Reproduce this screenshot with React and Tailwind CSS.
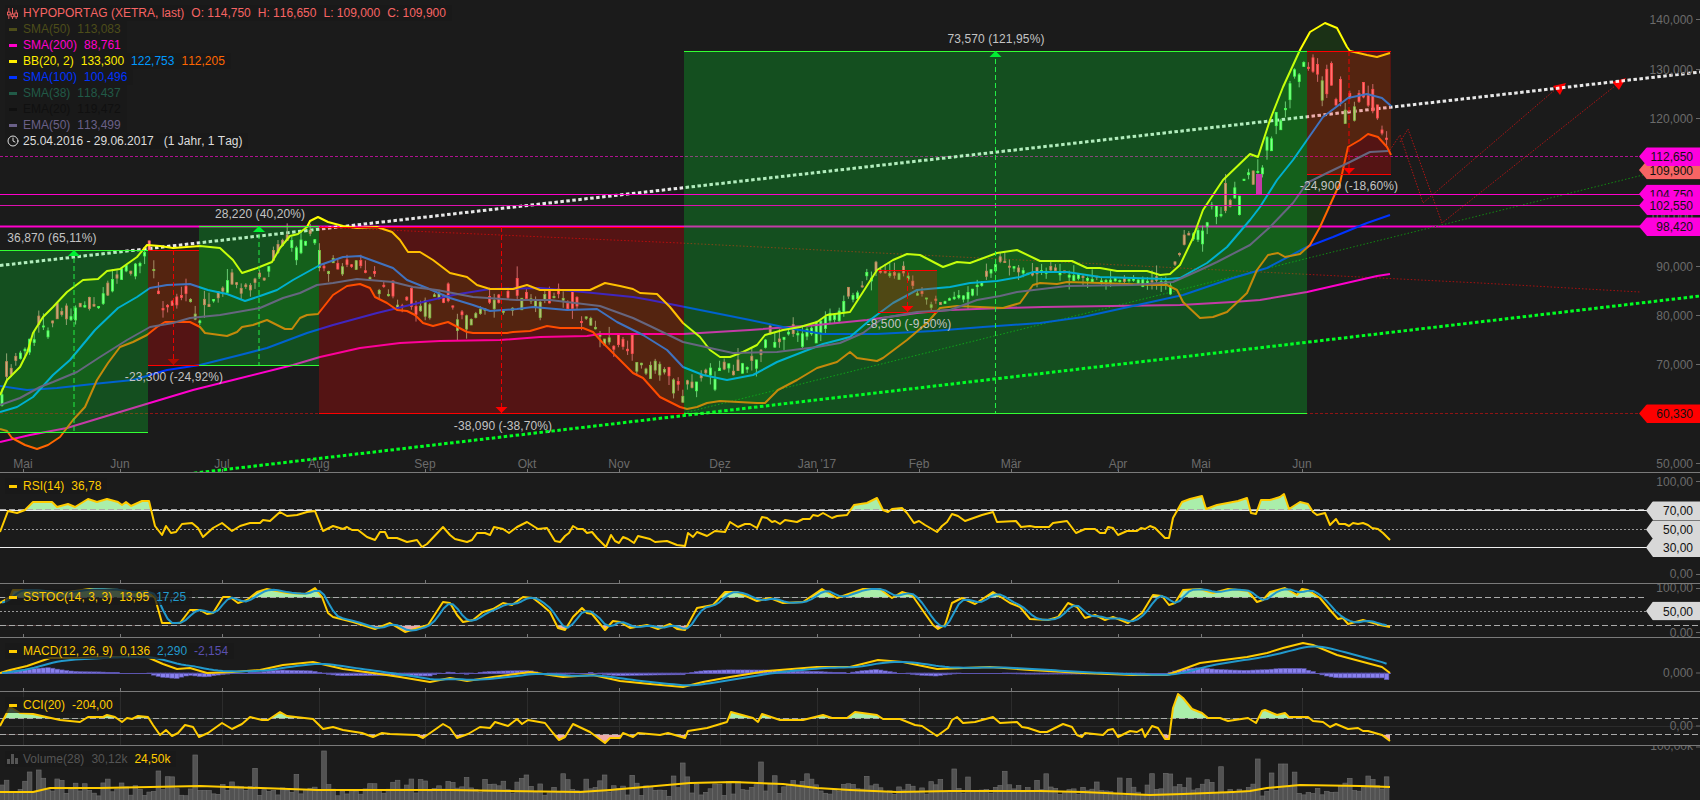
// App.jsx - HYPOPORT AG chart view
import React from "react";
import { Clock } from "lucide-react";

const parse = (s) => s.trim().split(/\s+/).map((p) => p.split(",").map(Number));
const str = (pts) => pts.map((p) => p.join(",")).join(" ");
const interp = (pts, x) => {
  if (x <= pts[0][0]) return pts[0][1];
  for (let i = 1; i < pts.length; i++) {
    if (x <= pts[i][0]) {
      const [x0, y0] = pts[i - 1];
      const [x1, y1] = pts[i];
      return y0 + ((y1 - y0) * (x - x0)) / (x1 - x0 || 1);
    }
  }
  return pts[pts.length - 1][1];
};

let seed = 4711;
const rnd = () => {
  seed = (seed * 16807) % 2147483647;
  return seed / 2147483647;
};

const bbUpper = parse(`0,395 7,380 20,367 27,353 33,333 43,317 53,307 67,292 83,280 98,279 107,271 120,269 137,257 147,245 160,246 173,248 200,246 220,248 233,260 242,273 257,268 272,262 280,248 290,236 298,234 307,227 310,221 318,217 328,222 343,226 357,228 377,227 392,232 400,240 408,252 420,252 433,260 450,273 467,277 477,285 490,289 513,289 527,285 540,290 590,290 605,283 620,286 633,289 640,293 657,294 670,307 683,323 700,337 710,350 720,357 730,357 743,352 757,345 765,335 783,330 800,327 817,322 827,315 850,312 863,292 877,270 893,260 907,254 920,255 943,267 957,262 970,263 997,253 1017,250 1040,261 1072,261 1087,268 1100,268 1117,271 1147,271 1160,275 1170,274 1180,265 1192,240 1203,210 1223,180 1250,154 1258,157 1270,120 1283,87 1300,50 1310,32 1325,23 1337,28 1347,47 1350,51 1367,55 1377,57 1390,53`);
const bbLower = parse(`0,429 7,431 12,438 25,445 37,449 48,445 60,437 73,420 85,407 97,380 108,363 120,347 133,342 147,335 157,327 165,322 190,322 200,327 205,333 227,336 237,332 242,327 253,325 267,320 277,325 285,329 292,329 300,318 307,315 318,314 333,295 347,286 360,284 370,288 375,297 387,303 397,310 407,311 415,315 423,323 433,326 448,322 467,332 473,333 507,333 513,332 530,331 547,326 560,328 583,328 593,332 602,342 617,357 633,373 643,378 660,397 680,407 687,409 697,407 707,403 720,401 757,403 765,403 778,390 797,380 817,368 837,362 850,352 857,358 877,361 883,358 907,340 927,323 940,308 957,306 1003,308 1020,303 1033,285 1040,283 1057,284 1067,282 1100,283 1153,285 1167,285 1177,290 1183,302 1200,318 1213,317 1227,312 1247,293 1257,270 1268,255 1278,253 1285,257 1300,254 1310,245 1320,227 1330,205 1340,183 1348,147 1360,140 1368,134 1378,137 1387,147 1391,155`);
const bbMid = parse(`0,412 17,407 33,397 53,375 70,360 95,330 118,308 137,297 150,288 167,285 190,284 208,290 227,294 245,301 260,296 277,290 293,280 320,265 343,257 360,256 393,268 407,280 427,288 450,298 473,305 490,311 517,309 533,307 567,310 597,309 617,322 643,335 667,350 683,367 703,375 727,380 753,375 777,362 800,353 823,344 850,337 870,320 893,303 917,290 950,287 970,283 997,281 1020,277 1033,272 1067,272 1100,277 1167,279 1180,278 1207,263 1227,247 1250,220 1260,207 1277,180 1293,160 1307,140 1323,117 1348,98 1367,94 1382,98 1391,106`);
const ema50 = parse(`0,405 20,398 40,387 53,382 77,372 100,357 127,340 150,327 173,323 190,318 220,315 260,308 283,298 300,293 317,285 333,283 357,279 393,282 413,287 437,290 473,297 517,300 550,300 600,306 633,318 650,326 683,342 710,348 733,353 777,352 817,347 840,343 863,333 883,318 917,312 950,310 977,300 1000,296 1017,292 1067,286 1133,285 1173,282 1200,270 1217,262 1250,245 1270,227 1293,203 1307,183 1327,173 1350,162 1370,152 1388,151`);
const sma100 = parse(`0,386 27,390 57,388 93,384 133,380 167,370 200,365 240,355 267,348 307,333 333,325 377,313 410,305 453,295 490,289 540,288 583,292 633,297 650,300 700,310 750,320 783,327 823,334 877,334 933,331 983,327 1040,323 1083,317 1133,306 1183,295 1233,278 1267,268 1307,247 1333,237 1367,223 1390,215`);
const sma200 = parse(`0,442 30,435 67,428 100,418 143,405 193,390 233,380 293,365 320,357 360,348 400,343 440,341 500,340 540,337 587,336 600,334 683,334 750,330 817,325 867,320 917,313 950,310 1003,308 1043,307 1180,305 1233,302 1260,300 1307,292 1377,276 1390,274`);
const priceAnchors = parse(`0,410 8,375 15,365 30,335 50,325 70,315 90,305 100,305 115,275 130,268 142,258 150,253 156,285 165,312 175,300 190,295 199,322 205,310 215,300 230,285 240,290 262,282 272,260 285,245 300,240 318,232 322,270 340,262 360,265 380,285 400,300 420,310 440,295 460,320 480,310 500,305 520,300 540,300 560,300 575,310 590,325 600,330 615,345 640,360 670,375 682,398 690,385 700,375 730,370 755,358 770,340 800,330 825,322 850,295 870,272 890,275 905,275 925,300 945,305 960,295 980,285 1000,262 1030,275 1050,270 1080,275 1100,280 1150,280 1170,280 1180,260 1195,235 1205,220 1225,205 1250,180 1262,160 1285,100 1303,60 1310,60 1320,85 1340,100 1360,105 1375,110 1383,125 1391,165`);

const rsi = parse(`0,532 8,511 17,513 25,510 33,502 52,502 57,507 68,504 75,507 88,499 97,502 107,499 118,502 122,505 126,502 131,506 142,501 149,501 155,526 162,535 166,526 171,533 176,532 182,524 192,523 198,528 203,537 213,528 222,523 232,531 240,526 250,523 260,523 263,520 270,521 280,512 287,516 297,515 307,512 315,511 323,531 333,526 343,529 347,527 352,530 358,530 367,537 375,540 380,532 385,532 388,538 397,538 407,542 417,540 422,547 427,544 443,527 450,535 455,539 467,542 472,540 477,533 485,533 490,535 494,527 503,529 509,533 517,527 527,522 538,529 547,528 555,541 560,542 565,536 569,533 573,526 578,529 583,529 587,533 592,532 597,538 606,547 611,535 615,541 619,543 623,537 628,539 634,543 638,536 650,539 655,542 667,541 677,545 685,546 688,533 693,537 697,532 707,536 715,531 725,532 730,522 738,527 745,524 750,524 757,528 762,517 767,518 772,522 775,521 780,524 785,520 797,522 803,519 810,519 813,515 818,516 823,513 832,518 837,516 847,515 854,505 867,503 877,498 883,510 888,512 892,509 902,508 907,513 914,523 919,521 925,525 937,532 942,526 947,522 952,514 958,516 965,521 982,515 993,512 997,522 1016,521 1021,527 1030,526 1035,527 1049,527 1053,523 1067,521 1076,533 1085,529 1095,529 1100,533 1105,533 1108,527 1113,528 1118,535 1127,531 1137,531 1141,528 1145,529 1150,526 1155,528 1165,538 1169,538 1173,518 1182,502 1190,499 1202,496 1206,509 1217,505 1238,501 1247,498 1251,513 1256,514 1261,500 1270,500 1280,497 1284,494 1289,509 1300,502 1308,504 1313,512 1317,515 1325,513 1330,525 1336,519 1339,524 1345,524 1349,526 1353,523 1358,524 1363,523 1368,525 1372,528 1378,529 1383,533 1390,540`);
const stochK = parse(`0,603 10,597 13,590 33,590 60,593 90,589 117,590 133,593 147,591 155,598 162,623 180,623 190,610 200,610 207,614 213,613 223,597 230,597 238,603 247,600 257,592 267,589 287,593 305,594 315,588 322,597 328,613 333,617 353,622 375,629 390,623 405,632 428,625 443,602 450,603 457,615 463,622 473,620 483,612 493,609 503,603 512,605 523,597 533,598 542,605 550,612 558,628 565,630 573,617 582,608 587,613 592,614 605,630 613,621 620,622 630,628 647,625 658,629 670,624 677,629 685,630 697,608 713,605 725,592 737,592 757,601 770,598 783,603 803,602 822,589 837,598 863,589 880,589 892,598 902,592 912,595 933,625 938,629 945,625 952,603 962,598 975,604 993,592 1010,603 1020,607 1030,619 1048,620 1058,617 1068,603 1077,607 1085,618 1095,615 1105,620 1113,617 1128,623 1142,613 1153,595 1162,596 1169,605 1175,603 1183,590 1200,589 1213,593 1228,589 1248,591 1257,602 1263,600 1270,592 1285,588 1297,595 1302,589 1308,590 1320,598 1330,610 1338,619 1343,618 1348,624 1363,620 1380,625 1390,627`);
const macd = parse(`0,673 10,670 27,666 50,658 80,658 100,657 147,657 163,664 177,669 190,668 207,673 233,672 260,670 283,665 313,662 343,669 373,673 400,677 430,682 450,678 467,681 493,677 530,672 563,677 593,675 620,681 650,684 683,687 703,682 730,677 767,671 817,667 850,667 878,660 903,662 937,669 990,667 1030,670 1083,673 1133,675 1167,675 1200,663 1247,657 1267,653 1283,648 1303,643 1313,645 1337,655 1367,663 1382,667 1390,673`);
const cci = parse(`0,726 10,707 20,713 33,714 60,720 80,722 88,717 103,717 107,715 115,717 122,722 127,718 132,719 138,716 148,717 153,725 160,735 166,730 172,736 178,733 185,725 193,727 199,737 208,733 222,723 232,729 242,724 250,717 262,720 268,720 280,712 287,716 313,719 323,729 333,727 343,730 362,733 373,737 382,733 390,734 417,735 423,738 443,724 450,728 457,738 468,734 480,727 490,728 495,722 508,726 517,719 522,724 528,720 545,723 553,733 559,740 565,737 573,724 590,732 605,743 610,738 620,738 623,733 633,737 638,733 660,735 668,733 685,738 688,731 707,728 727,722 731,712 753,718 758,722 762,714 780,720 803,720 823,715 832,718 847,718 855,712 877,715 883,719 900,719 915,725 922,726 937,736 948,728 952,720 957,717 963,723 975,722 993,717 1000,723 1017,722 1022,727 1028,728 1040,732 1047,732 1063,724 1072,727 1077,735 1082,737 1085,733 1103,735 1108,730 1113,729 1118,737 1130,731 1137,732 1142,729 1145,737 1152,726 1158,728 1165,739 1169,739 1173,708 1178,694 1183,698 1192,709 1202,713 1208,718 1220,718 1228,721 1248,718 1256,723 1262,711 1265,710 1277,715 1285,713 1289,717 1308,717 1313,721 1323,722 1330,727 1336,724 1348,729 1358,728 1363,731 1368,731 1382,735 1390,741`);
const volAvg = parse(`0,792 33,792 50,788 100,788 200,786 317,790 450,790 580,792 610,790 690,783 733,782 783,784 817,788 850,790 897,792 950,791 1040,791 1083,792 1150,795 1183,794 1233,792 1250,791 1267,788 1300,785 1360,786 1390,787`);

const months = [
  [23, "Mai"], [120, "Jun"], [222, "Jul"], [319, "Aug"], [425, "Sep"], [527, "Okt"], [619, "Nov"],
  [720, "Dez"], [817, "Jan '17"], [919, "Feb"], [1011, "Mär"], [1118, "Apr"], [1201, "Mai"], [1302, "Jun"],
];

// one bar every 4.6px, same grid for candles, histogram and volume
const barXs = [];
for (let x = 2; x <= 1390; x += 4.6) barXs.push(x);

const candles = barXs.map((x) => {
  const amp = x > 1180 ? 22 : x > 1000 && x < 1170 ? 4 : x > 880 && x <= 1000 ? 7 : 14;
  const close = interp(priceAnchors, x) + (rnd() - 0.5) * amp;
  const up = x > 1180 && x < 1305 ? rnd() > 0.25 : x >= 1305 ? rnd() > 0.75 : rnd() > 0.48;
  const len = rnd() * rnd() * amp * 1.5 + 1;
  const top = up ? close : close - len;
  return { x, up, top, h: len, hi: top - rnd() * rnd() * 14, lo: top + len + rnd() * rnd() * 14 };
});

const stochD = barXs.map((x) => {
  const a = interp(stochK, x);
  const b = interp(stochK, x - 4.6);
  const c = interp(stochK, x - 9.2);
  return [x, (a + b + c) / 3];
});

const macdBars = (() => {
  let sig = interp(macd, 0);
  return barXs.map((x) => {
    const m = interp(macd, x);
    sig = sig + (m - sig) * 0.2;
    return { x, sig, diff: m - sig };
  });
})();
const macdSignal = macdBars.map((b) => [b.x, b.sig]);

const volSpikes = {
  197: 755, 323: 751, 526: 775, 683: 763, 761: 762, 955: 769, 1258: 759, 1283: 764, 40: 770, 29: 772, 160: 771,
  605: 775, 1187: 778, 1270: 773, 1098: 782, 1120: 778,
};
const volBars = barXs.map((x) => {
  const key = Object.keys(volSpikes).find((k) => Math.abs(k - x) < 2.4);
  const top = key ? volSpikes[key] : 797 - rnd() * rnd() * 26 - rnd() * 7;
  return { x, top };
});

const Line = ({ pts, color, width = 2, dash, opacity }) => (
  <polyline
    points={str(pts)}
    fill="none"
    stroke={color}
    strokeWidth={width}
    strokeDasharray={dash}
    strokeLinejoin="round"
    opacity={opacity}
  />
);

const HLine = ({ y, x2 = 1640, color, width = 1, dash }) => (
  <line x1="0" y1={y} x2={x2} y2={y} stroke={color} strokeWidth={width} strokeDasharray={dash} />
);

const Ticks = ({ y, grid, top }) =>
  months.map(([x]) => (
    <line key={x} x1={x + 0.5} x2={x + 0.5} y1={grid ? top : y - 3} y2={y} stroke={grid ? "#2c2c2c" : "#777777"} />
  ));

const YTicks = ({ ys }) =>
  ys.map((y) => <line key={y} x1="1696" x2="1700" y1={y} y2={y} stroke="#6b6b6b" />);

// shaded part of an oscillator beyond a level
const Beyond = ({ id, pts, level, above, color }) => {
  const last = pts[pts.length - 1][0];
  return (
    <>
      <clipPath id={id}>
        {above ? <rect x="0" y="0" width="1700" height={level} /> : <rect x="0" y={level} width="1700" height="300" />}
      </clipPath>
      <polygon points={`${str(pts)} ${last},${level} 0,${level}`} fill={color} clipPath={`url(#${id})`} />
    </>
  );
};

const Box = ({ x1, x2, y1, y2, red, arrowDark }) => {
  const color = red ? "#ff0000" : "#33ff33";
  const cx = (x1 + x2) / 2;
  const arrow = red
    ? `${cx - 6},${y2 - 6} ${cx + 6},${y2 - 6} ${cx},${y2}`
    : `${cx - 6},${y1 + 6} ${cx + 6},${y1 + 6} ${cx},${y1}`;
  return (
    <>
      <rect
        x={x1}
        y={y1}
        width={x2 - x1}
        height={y2 - y1}
        fill={red ? "#ff0000" : "#00ff30"}
        opacity={red ? "0.25" : "0.23"}
      />
      <line x1={x1} x2={x2} y1={y1 + 0.5} y2={y1 + 0.5} stroke={color} />
      <line x1={x1} x2={x2} y1={y2 + 0.5} y2={y2 + 0.5} stroke={color} />
      <line x1={cx} x2={cx} y1={y1} y2={y2} stroke={red ? "#ee0000" : "#22ee44"} strokeDasharray="5 3" />
      <polygon points={arrow} fill={arrowDark ? "#b00d00" : red ? "#ff0000" : "#00ee33"} />
    </>
  );
};

const Axis = ({ y, top, children }) => (
  <div
    className="absolute right-[7px] -translate-y-1/2 text-[12px] leading-none text-[#6b6b6b]"
    style={{ top: y - top }}
  >
    {children}
  </div>
);

const PriceTag = ({ y, top, bg, children }) => (
  <div
    className={`absolute right-0 flex h-[19px] w-[61px] -translate-y-1/2 items-center justify-end pr-[7px] text-[12px] leading-none text-[#111111] [clip-path:polygon(8px_0,100%_0,100%_100%,8px_100%,0_50%)] ${bg}`}
    style={{ top: y - top }}
  >
    {children}
  </div>
);

const LevelTag = ({ y, top, children }) => (
  <div
    className="absolute right-0 flex h-[19px] w-[54px] -translate-y-1/2 items-center justify-end bg-[#d8d8d8] pr-[7px] text-[12px] leading-none text-[#111111] [clip-path:polygon(7px_0,100%_0,100%_100%,7px_100%,0_50%)]"
    style={{ top: y - top }}
  >
    {children}
  </div>
);

const Note = ({ x, y, children }) => (
  <div
    className="absolute -translate-x-1/2 -translate-y-1/2 whitespace-nowrap text-[12px] leading-none tracking-[0.1px] text-[#c4c4c4]"
    style={{ left: x, top: y }}
  >
    {children}
  </div>
);

const LegendRow = ({ dash, icon, items }) => (
  <div className="flex h-4 w-fit items-center whitespace-nowrap bg-[#1a1a1a]/75 pl-1 pr-1.5 text-[12px] leading-none">
    {icon ? <span className="-ml-0.5 mr-[5px] flex w-[11px] items-center">{icon}</span> : <span className={`mr-1.5 h-[3px] w-2 ${dash}`} />}
    <div className="flex gap-[7px]">
      {items.map(([text, cls]) => (
        <span key={text} className={cls}>
          {text}
        </span>
      ))}
    </div>
  </div>
);

const Panel = ({ top, inner, className, svg, children }) => (
  <div className={`relative w-full shrink-0 overflow-hidden ${className}`}>
    <svg className="absolute inset-0 h-full w-full" viewBox={`0 ${top} 1700 ${inner}`}>
      {svg}
    </svg>
    {children}
  </div>
);

const MainChart = () => (
  <Panel
    top={0}
    inner={472}
    className="h-[473px] border-b border-[#7a7a7a]"
    svg={
      <>
        <polygon points={`${str(bbUpper)} ${str([...bbLower].reverse())}`} fill="#20a000" opacity="0.17" />
        <HLine y={156.5} color="#b0108f" dash="3 2" />
        <HLine y={226.5} color="#ff00cc" width={2} />
        <HLine y={413.5} color="#8f1414" dash="3 2" />
        <polyline points="320,227 680,243 1040,261 1480,283 1640,292" fill="none" stroke="#a81010" strokeDasharray="1.5 2" />
        <polyline points="684,413 1643,175" fill="none" stroke="#128a12" strokeDasharray="1.5 2" />
        <polyline points="1390,150 1400,135 1423,203 1557,88" fill="none" stroke="#b01515" strokeDasharray="1.5 1.5" />
        <polyline points="1400,142 1408,129 1442,223 1620,82" fill="none" stroke="#b01515" strokeDasharray="1.5 1.5" />
        <polygon points="1553,86 1566,83 1560,95" fill="#ff0000" />
        <polygon points="1612,82 1626,78 1619,90" fill="#ff0000" />
        <polyline points="170,476 1700,296" fill="none" stroke="#00ff22" strokeWidth="3" strokeDasharray="3.5 2.5" />
        <polyline points="0,265.5 1700,72" fill="none" stroke="#ffffff" strokeWidth="3" strokeDasharray="3.5 2.5" opacity="0.9" />
        {candles.map((c) => (
          <g key={c.x}>
            <line x1={c.x} x2={c.x} y1={c.hi} y2={c.lo} stroke={c.up ? "#88bb88" : "#bb8888"} />
            <rect
              x={c.x - 1}
              y={c.top}
              width="2"
              height={c.h}
              fill={c.up ? "#aaffaa" : "#ff9999"}
              stroke={c.up ? "#55ff55" : "#ff6060"}
              strokeWidth="0.8"
            />
          </g>
        ))}
        <rect x="1256" y="174" width="6" height="20" fill="#ff00cc" />
        <Line pts={sma200} color="#ff00cc" />
        <Line pts={sma100} color="#0033ff" />
        <Line pts={bbLower} color="#ff6600" />
        <Line pts={bbMid} color="#0099ff" />
        <Line pts={bbUpper} color="#ffff00" />
        <Box x1={0} x2={148} y1={250} y2={432} />
        <Box x1={148} x2={199} y1={250} y2={365} red arrowDark />
        <Box x1={199} x2={319} y1={226} y2={365} />
        <Box x1={319} x2={684} y1={227} y2={413} red />
        <Box x1={684} x2={1307} y1={51} y2={413} />
        <Box x1={878} x2={937} y1={270} y2={312} red />
        <Box x1={1307} x2={1391} y1={51} y2={174} red />
        <Line pts={ema50} color="#66667f" />
        <HLine y={194.5} color="#ff00cc" />
        <HLine y={205.5} color="#e010b0" />
        <Ticks y={472} />
        <YTicks ys={[19.5, 69.5, 118.5, 266.5, 315.5, 364.5, 463.5]} />
      </>
    }
  >
    {months.map(([x, label]) => (
      <div
        key={x}
        className="absolute top-[458px] -translate-x-1/2 whitespace-nowrap text-[12px] leading-none text-[#6b6b6b]"
        style={{ left: x }}
      >
        {label}
      </div>
    ))}

    <Axis y={19.5} top={0}>140,000</Axis>
    <Axis y={69.5} top={0}>130,000</Axis>
    <Axis y={118.5} top={0}>120,000</Axis>
    <Axis y={168} top={0}>110,000</Axis>
    <Axis y={217} top={0}>100,000</Axis>
    <Axis y={266.5} top={0}>90,000</Axis>
    <Axis y={315.5} top={0}>80,000</Axis>
    <Axis y={364.5} top={0}>70,000</Axis>
    <Axis y={463.5} top={0}>50,000</Axis>

    <PriceTag y={170} top={0} bg="bg-[#f76464]">109,900</PriceTag>
    <PriceTag y={156.5} top={0} bg="bg-[#ff00dd]">112,650</PriceTag>
    <PriceTag y={194} top={0} bg="bg-[#ff00dd]">104,750</PriceTag>
    <PriceTag y={205.5} top={0} bg="bg-[#ff00dd]">102,550</PriceTag>
    <PriceTag y={226.5} top={0} bg="bg-[#ff00dd]">98,420</PriceTag>
    <PriceTag y={413.5} top={0} bg="bg-[#ff0000]">60,330</PriceTag>

    <Note x={52} y={238}>36,870 (65,11%)</Note>
    <Note x={260} y={214}>28,220 (40,20%)</Note>
    <Note x={174} y={377}>-23,300 (-24,92%)</Note>
    <Note x={503} y={426}>-38,090 (-38,70%)</Note>
    <Note x={996} y={39}>73,570 (121,95%)</Note>
    <Note x={909} y={324}>-8,500 (-9,50%)</Note>
    <Note x={1349} y={186}>-24,900 (-18,60%)</Note>

    {/* Legend */}
    <div className="absolute left-[5px] top-[5px] flex flex-col [font-kerning:none]">
      <LegendRow
        icon={
          <svg width="11" height="11" viewBox="0 0 12 12" fill="none" stroke="#f76464" className="shrink-0">
            <path d="M2 0v12M6 0v12M10 2v10" />
            <rect x="0.5" y="4.5" width="3" height="3" fill="#1a1a1a" />
            <rect x="4.5" y="6.5" width="3" height="3" fill="#1a1a1a" />
            <rect x="8.5" y="5.5" width="3" height="4" fill="#1a1a1a" />
          </svg>
        }
        items={[
          ["HYPOPORTAG (XETRA, last)", "text-[#f76464]"],
          ["O: 114,750", "text-[#f76464]"],
          ["H: 116,650", "text-[#f76464]"],
          ["L: 109,000", "text-[#f76464]"],
          ["C: 109,900", "text-[#f76464]"],
        ]}
      />
      <LegendRow dash="bg-[#4d4d19]" items={[["SMA(50)", "text-[#4d4d19]"], ["113,083", "text-[#4d4d19]"]]} />
      <LegendRow dash="bg-[#ff00cc]" items={[["SMA(200)", "text-[#ff00cc]"], ["88,761", "text-[#ff00cc]"]]} />
      <LegendRow
        dash="bg-[#ffee00]"
        items={[
          ["BB(20, 2)", "text-[#ffee00]"],
          ["133,300", "text-[#ffee00]"],
          ["122,753", "text-[#0099ff]"],
          ["112,205", "text-[#ff6600]"],
        ]}
      />
      <LegendRow dash="bg-[#0033ff]" items={[["SMA(100)", "text-[#0033ff]"], ["100,496", "text-[#0033ff]"]]} />
      <LegendRow dash="bg-[#215a47]" items={[["SMA(38)", "text-[#215a47]"], ["118,437", "text-[#215a47]"]]} />
      <LegendRow dash="bg-[#101010]" items={[["EMA(20)", "text-[#101010]"], ["119,472", "text-[#101010]"]]} />
      <LegendRow dash="bg-[#6a6088]" items={[["EMA(50)", "text-[#6a6088]"], ["113,499", "text-[#6a6088]"]]} />
      <LegendRow
        icon={<Clock size={12} color="#dddddd" className="shrink-0" />}
        items={[
          ["25.04.2016 - 29.06.2017", "text-[#dddddd]"],
          ["(1 Jahr, 1 Tag)", "ml-[3px] text-[#dddddd]"],
        ]}
      />
    </div>
  </Panel>
);

const RsiPanel = () => (
  <Panel
    top={473}
    inner={110}
    className="h-[111px] border-b border-[#7a7a7a]"
    svg={
      <>
        <Beyond id="rsi-up" pts={rsi} level={510} above color="#aaeeaa" />
        <HLine y={509.5} color="#aaaaaa" dash="6 3" x2={1647} />
        <HLine y={510.5} color="#eeeeee" x2={1647} />
        <HLine y={529.5} color="#999999" dash="2 2" x2={1647} />
        <HLine y={547.5} color="#eeeeee" x2={1647} />
        <Line pts={rsi} color="#ffcc00" />
        <Ticks y={583} />
        <YTicks ys={[481.5, 574.5]} />
      </>
    }
  >
    <div className="absolute left-[5px] top-[5px]">
      <LegendRow dash="bg-[#ffcc00]" items={[["RSI(14)", "text-[#ffcc00]"], ["36,78", "text-[#ffcc00]"]]} />
    </div>
    <Axis y={481.5} top={473}>100,00</Axis>
    <Axis y={574} top={473}>0,00</Axis>
    <LevelTag y={510.5} top={473}>70,00</LevelTag>
    <LevelTag y={529.5} top={473}>50,00</LevelTag>
    <LevelTag y={547.5} top={473}>30,00</LevelTag>
  </Panel>
);

const StochPanel = () => (
  <Panel
    top={584}
    inner={53}
    className="h-[54px] border-b border-[#7a7a7a]"
    svg={
      <>
        <Beyond id="stoch-up" pts={stochK} level={597.5} above color="#aaeeaa" />
        <Beyond id="stoch-down" pts={stochK} level={625.5} color="#eeaaaa" />
        <HLine y={597.5} color="#aaaaaa" dash="6 3" x2={1647} />
        <HLine y={611.5} color="#999999" dash="2 2" x2={1647} />
        <HLine y={625.5} color="#aaaaaa" dash="6 3" x2={1700} />
        <Line pts={stochK} color="#ffcc00" />
        <Line pts={stochD} color="#2299cc" />
        <Ticks y={637} />
        <YTicks ys={[588.5, 632.5]} />
      </>
    }
  >
    <div className="absolute left-[5px] top-[5px]">
      <LegendRow
        dash="bg-[#ffcc00]"
        items={[
          ["SSTOC(14, 3, 3)", "text-[#ffcc00]"],
          ["13,95", "text-[#ffcc00]"],
          ["17,25", "text-[#2299cc]"],
        ]}
      />
    </div>
    <Axis y={588} top={584}>100,00</Axis>
    <Axis y={632.5} top={584}>0,00</Axis>
    <LevelTag y={611} top={584}>50,00</LevelTag>
  </Panel>
);

const MacdPanel = () => (
  <Panel
    top={638}
    inner={53}
    className="h-[54px] border-b border-[#7a7a7a]"
    svg={
      <>
        {macdBars.map((b) =>
          Math.abs(b.diff) > 0.4 ? (
            <rect
              key={b.x}
              x={b.x - 2.3}
              y={Math.min(673, 673 + b.diff)}
              width="4.6"
              height={Math.abs(b.diff)}
              fill="#8880ee"
              stroke="#5c55b0"
              strokeWidth="0.6"
            />
          ) : null
        )}
        <line x1="0" x2="1391" y1="673.5" y2="673.5" stroke="#5c55b0" />
        <Line pts={macd} color="#ffcc00" />
        <Line pts={macdSignal} color="#2299cc" />
        <Ticks y={691} />
        <YTicks ys={[673]} />
      </>
    }
  >
    <div className="absolute left-[5px] top-[5px]">
      <LegendRow
        dash="bg-[#ffcc00]"
        items={[
          ["MACD(12, 26, 9)", "text-[#ffcc00]"],
          ["0,136", "text-[#ffcc00]"],
          ["2,290", "text-[#2299cc]"],
          ["-2,154", "text-[#5a50b0]"],
        ]}
      />
    </div>
    <Axis y={672.5} top={638}>0,000</Axis>
  </Panel>
);

const CciPanel = () => (
  <Panel
    top={692}
    inner={53}
    className="h-[54px] border-b border-[#7a7a7a]"
    svg={
      <>
        <Ticks y={745} top={692} grid />
        <HLine y={726.5} color="#2c2c2c" x2={1700} />
        <Beyond id="cci-up" pts={cci} level={718.5} above color="#aaeeaa" />
        <Beyond id="cci-down" pts={cci} level={734.5} color="#eeaaaa" />
        <HLine y={718.5} color="#aaaaaa" dash="6 3" x2={1700} />
        <HLine y={734.5} color="#aaaaaa" dash="6 3" x2={1700} />
        <Line pts={cci} color="#ffcc00" />
        <YTicks ys={[726]} />
      </>
    }
  >
    <div className="absolute left-[5px] top-[5px]">
      <LegendRow dash="bg-[#ffcc00]" items={[["CCI(20)", "text-[#ffcc00]"], ["-204,00", "text-[#ffcc00]"]]} />
    </div>
    <Axis y={725.5} top={692}>0,00</Axis>
  </Panel>
);

const VolumePanel = () => (
  <Panel
    top={746}
    inner={54}
    className="h-[54px]"
    svg={
      <>
        {volBars.map((b) => (
          <rect
            key={b.x}
            x={b.x - 2.3}
            y={b.top}
            width="4.6"
            height={804 - b.top}
            fill="#555555"
            stroke="#6f6f6f"
            strokeWidth="0.7"
            opacity="0.95"
          />
        ))}
        <Line pts={volAvg} color="#ffcc00" />
        <YTicks ys={[747]} />
      </>
    }
  >
    <div className="absolute left-[5px] top-[5px]">
      <LegendRow
        icon={
          <svg width="11" height="10" viewBox="0 0 11 10" fill="#555555" className="shrink-0">
            <rect x="0" y="5" width="3" height="5" />
            <rect x="4" y="0" width="3" height="10" />
            <rect x="8" y="4" width="3" height="6" />
          </svg>
        }
        items={[
          ["Volume(28)", "text-[#555555]"],
          ["30,12k", "text-[#555555]"],
          ["24,50k", "text-[#ffcc00]"],
        ]}
      />
    </div>
    <div className="absolute right-[7px] top-[-6px] text-[12px] leading-none text-[#6b6b6b]">100,00k</div>
  </Panel>
);

const App = () => {
  return (
    <div className="flex h-[800px] w-[1700px] flex-col overflow-hidden bg-[#1b1b1b] font-['Liberation_Sans',Arial,sans-serif]">
      <MainChart />
      <RsiPanel />
      <StochPanel />
      <MacdPanel />
      <CciPanel />
      <VolumePanel />
    </div>
  );
};

export default App;
